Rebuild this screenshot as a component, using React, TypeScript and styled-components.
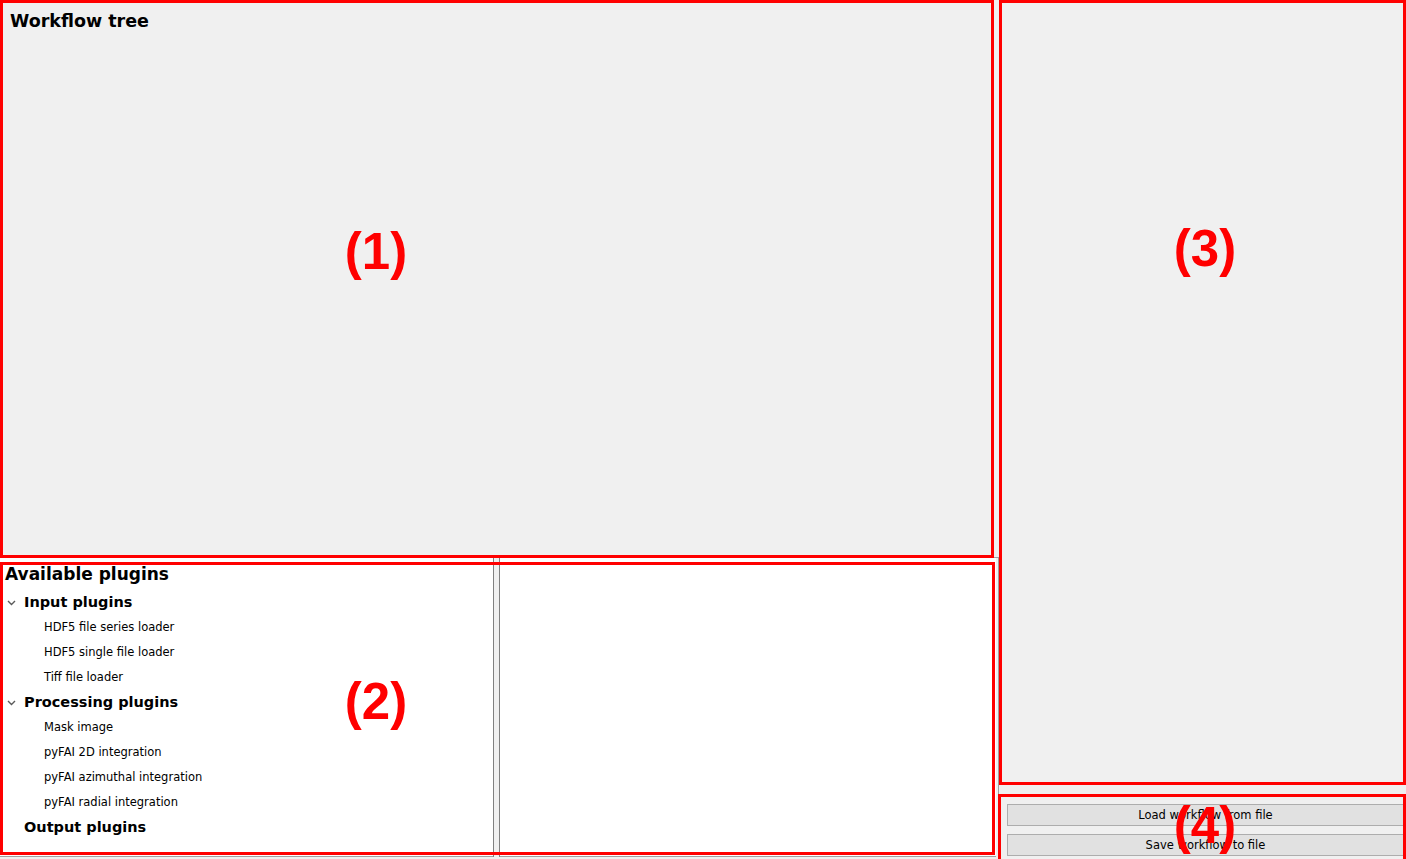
import styled, { createGlobalStyle } from "styled-components";

const GlobalStyle = createGlobalStyle`
  html, body {
    margin: 0;
    padding: 0;
    background: #f0f0f0;
  }
`;

// Janela principal
const Window = styled.div`
  position: relative;
  width: 1406px;
  height: 859px;
  overflow: hidden;
  display: flex;
  background: #f0f0f0;
  font-family: "DejaVu Sans", "Liberation Sans", sans-serif;
  color: #000;
`;

const LeftColumn = styled.div`
  width: 999px;
  display: flex;
  flex-direction: column;
`;

const WorkflowPanel = styled.section`
  height: 557px;
  box-sizing: border-box;
  padding: 11px 0 0 10px;
`;

const PanelTitle = styled.h2<{ $size: number }>`
  margin: 0;
  font-size: ${({ $size }) => $size}px;
  line-height: 20px;
  font-weight: bold;
`;

const BottomArea = styled.div`
  flex: 1;
  display: flex;
  border-top: 1px solid #a0a0a0;
  border-right: 1px solid #a0a0a0;
  padding: 0 2px 2px 0;
`;

const Pane = styled.div<{ $width?: number }>`
  background: #fff;
  border-bottom: 1px solid #a0a0a0;
  box-sizing: border-box;
  ${({ $width }) => ($width ? `width: ${$width}px;` : "flex: 1;")}
`;

const TreePane = styled(Pane)`
  padding: 4px 0 0 5px;
`;

const SplitHandle = styled.div`
  width: 5px;
  background: #f0f0f0;
  border-left: 1px solid #808080;
  border-right: 1px solid #808080;
`;

const TreeHeader = styled.div`
  font-size: 17px;
  font-weight: bold;
  line-height: 24px;
  margin-bottom: 4px;
`;

const TreeRow = styled.div<{ $indent: number }>`
  height: 25px;
  display: flex;
  align-items: center;
  padding-left: ${({ $indent }) => $indent}px;
`;

const Chevron = styled.span`
  width: 19px;
  display: flex;
  align-items: center;
  padding-left: 2px;
  box-sizing: border-box;
`;

const CategoryLabel = styled.span`
  font-size: 14.5px;
  font-weight: bold;
  margin-top: -1px;
`;

const ItemLabel = styled.span`
  font-size: 11.5px;
  margin-top: -2px;
`;

const RightColumn = styled.div`
  flex: 1;
  display: flex;
  flex-direction: column;
`;

const InfoPanel = styled.section`
  flex: 1;
`;

const ButtonBar = styled.div`
  display: flex;
  flex-direction: column;
  gap: 8px;
  padding: 0 2px 3px 8px;
`;

const PushButton = styled.button`
  height: 22px;
  margin: 0;
  padding: 0;
  background: #e1e1e1;
  border: 1px solid #adadad;
  font-family: "DejaVu Sans", "Liberation Sans", sans-serif;
  font-size: 11.5px;
  color: #000;
`;

// Marcas vermelhas de anotação por cima da interface
const Annotation = styled.div<{ $x: number; $y: number; $w: number; $h: number }>`
  position: absolute;
  left: ${({ $x }) => $x}px;
  top: ${({ $y }) => $y}px;
  width: ${({ $w }) => $w}px;
  height: ${({ $h }) => $h}px;
  box-sizing: border-box;
  border: 3px solid #ff0000;
  pointer-events: none;
`;

const AnnotationLabel = styled.div<{ $x: number; $y: number }>`
  position: absolute;
  left: ${({ $x }) => $x}px;
  top: ${({ $y }) => $y}px;
  transform: translate(-50%, -50%);
  font-family: "Liberation Sans", Arial, sans-serif;
  font-weight: bold;
  font-size: 51px;
  line-height: 1;
  color: #ff0000;
  pointer-events: none;
`;

const ChevronIcon = () => (
  <svg width="9" height="6" viewBox="0 0 9 6">
    <path d="M1 1 L4.5 4.5 L8 1" fill="none" stroke="#5a5a5a" strokeWidth="1.4" />
  </svg>
);

const plugins = [
  { name: "Input plugins", open: true, items: ["HDF5 file series loader", "HDF5 single file loader", "Tiff file loader"] },
  {
    name: "Processing plugins",
    open: true,
    items: ["Mask image", "pyFAI 2D integration", "pyFAI azimuthal integration", "pyFAI radial integration"],
  },
  { name: "Output plugins", open: false, items: [] as string[] },
];

const annotations = [
  { id: 1, x: 0, y: 0, w: 994, h: 558, lx: 376, ly: 251 },
  { id: 2, x: 0, y: 562, w: 995, h: 293, lx: 376, ly: 701 },
  { id: 3, x: 999, y: 0, w: 407, h: 785, lx: 1205, ly: 248 },
  { id: 4, x: 998, y: 794, w: 408, h: 80, lx: 1205, ly: 825 },
];

const App = () => {
  return (
    <Window>
      <GlobalStyle />
      <LeftColumn>
        <WorkflowPanel>
          <PanelTitle $size={17.5}>Workflow tree</PanelTitle>
        </WorkflowPanel>
        <BottomArea>
          <TreePane $width={493}>
            <TreeHeader>Available plugins</TreeHeader>
            {plugins.map((group) => (
              <div key={group.name}>
                <TreeRow $indent={0}>
                  <Chevron>{group.open && <ChevronIcon />}</Chevron>
                  <CategoryLabel>{group.name}</CategoryLabel>
                </TreeRow>
                {group.items.map((item) => (
                  <TreeRow key={item} $indent={39}>
                    <ItemLabel>{item}</ItemLabel>
                  </TreeRow>
                ))}
              </div>
            ))}
          </TreePane>
          <SplitHandle />
          <Pane />
        </BottomArea>
      </LeftColumn>
      <RightColumn>
        <InfoPanel />
        <ButtonBar>
          <PushButton>Load workflow from file</PushButton>
          <PushButton>Save workflow to file</PushButton>
        </ButtonBar>
      </RightColumn>

      {annotations.map((a) => (
        <Annotation key={a.id} $x={a.x} $y={a.y} $w={a.w} $h={a.h} />
      ))}
      {annotations.map((a) => (
        <AnnotationLabel key={`l${a.id}`} $x={a.lx} $y={a.ly}>
          ({a.id})
        </AnnotationLabel>
      ))}
    </Window>
  );
};

export default App;
